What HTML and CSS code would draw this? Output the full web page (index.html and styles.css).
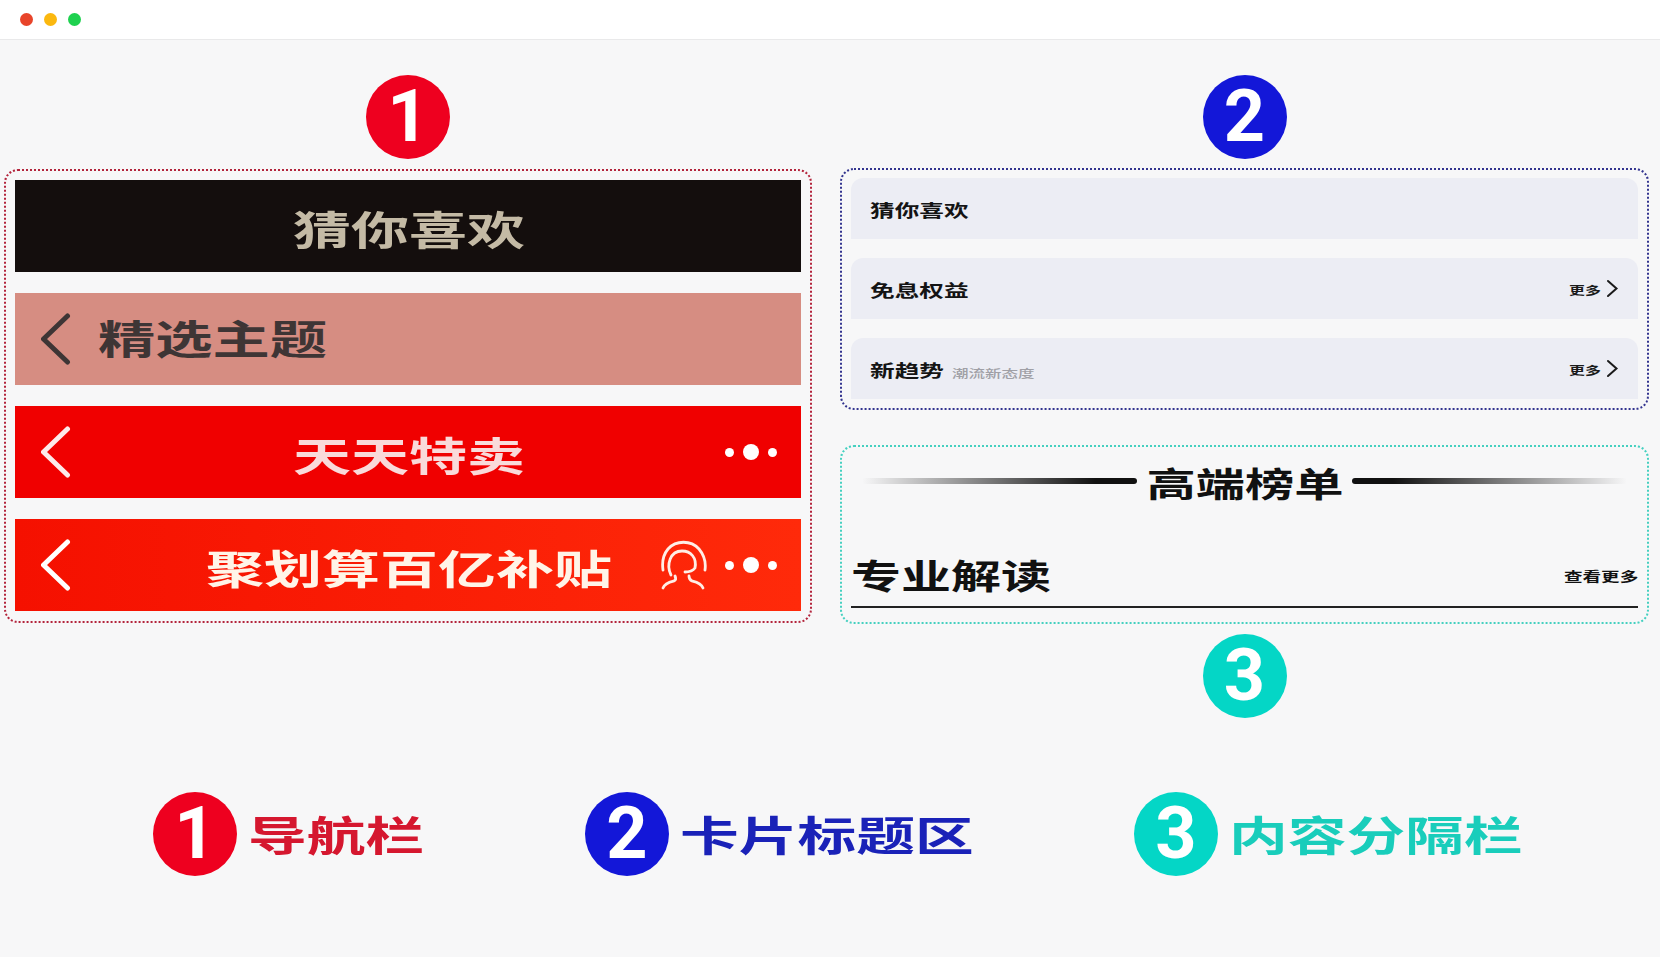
FILE: index.html
```html
<!DOCTYPE html>
<html lang="zh-CN">
<head>
  <meta charset="UTF-8" />
  <meta name="viewport" content="width=device-width, initial-scale=1.0" />
  <title>导航栏 卡片标题区 内容分隔栏</title>
  <link rel="stylesheet" href="styles.css">
</head>
<body>
  <header class="titlebar">
    <span class="light light-red"></span>
    <span class="light light-yellow"></span>
    <span class="light light-green"></span>
  </header>

  <main class="board">
    <section class="col">
      <div class="badge badge-red">1</div>
      <div class="panel panel-red">
        <div class="bar bar-black">
          <span></span>
          <span class="wide bar-title">猜你喜欢</span>
          <span></span>
        </div>
        <div class="bar bar-rose bar-left">
          <svg class="back" viewBox="0 0 30 52"><polyline points="26.5,3 2.5,26 26.5,49" /></svg>
          <span class="wide from-left bar-text">精选主题</span>
        </div>
        <div class="bar bar-red">
          <svg class="back" viewBox="0 0 30 52"><polyline points="26.5,3 2.5,26 26.5,49" /></svg>
          <span class="wide bar-title">天天特卖</span>
          <div class="actions">
            <div class="dots"><i></i><b></b><i></i></div>
          </div>
        </div>
        <div class="bar bar-orange">
          <svg class="back" viewBox="0 0 30 52"><polyline points="26.5,3 2.5,26 26.5,49" /></svg>
          <span class="wide bar-title">聚划算百亿补贴</span>
          <div class="actions">
            <svg class="headset" viewBox="0 0 48 52">
              <path d="M3 31 C2 24 3 16 8 10 C16 1 31 1 39 10 C44 16 46 24 45 31" />
              <path d="M11 36 C6 26 10 12 22 12 C31 12 37 19 35 29 C32 33 28 33 25 33" />
              <path d="M3 49 C5 44 10 43 14 42 C16 41 16 39 15 37" />
              <path d="M43 49 C41 44 36 43 32 42 C30 41 29 39 29 37" />
            </svg>
            <div class="dots"><i></i><b></b><i></i></div>
          </div>
        </div>
      </div>
    </section>

    <section class="col">
      <div class="badge badge-blue">2</div>
      <div class="panel panel-blue">
        <div class="row">
          <span class="wide from-left row-title">猜你喜欢</span>
        </div>
        <div class="row">
          <span class="wide from-left row-title">免息权益</span>
          <a class="more"><span class="wide from-right">更多</span>
            <svg class="next" viewBox="0 0 13 19"><polyline points="2,2 10.5,9.5 2,17" /></svg>
          </a>
        </div>
        <div class="row">
          <div class="row-left">
            <span class="wide from-left row-title row-title-short">新趋势</span>
            <span class="wide from-left row-sub">潮流新态度</span>
          </div>
          <a class="more"><span class="wide from-right">更多</span>
            <svg class="next" viewBox="0 0 13 19"><polyline points="2,2 10.5,9.5 2,17" /></svg>
          </a>
        </div>
      </div>
      <div class="panel panel-teal">
        <div class="rank-head">
          <span class="rule rule-in"></span>
          <div class="rank-title"><span class="wide">高端榜单</span></div>
          <span class="rule rule-out"></span>
        </div>
        <div class="sub-head">
          <span class="wide from-left sub-title">专业解读</span>
          <span class="wide from-right sub-more">查看更多</span>
        </div>
      </div>
      <div class="badge badge-teal">3</div>
    </section>
  </main>

  <footer class="legend">
    <div class="legend-item">
      <div class="badge badge-red">1</div>
      <div class="legend-label label-3 text-red"><span class="wide from-left">导航栏</span></div>
    </div>
    <div class="legend-item">
      <div class="badge badge-blue">2</div>
      <div class="legend-label label-5 text-blue"><span class="wide from-left">卡片标题区</span></div>
    </div>
    <div class="legend-item">
      <div class="badge badge-teal">3</div>
      <div class="legend-label label-5 text-teal"><span class="wide from-left">内容分隔栏</span></div>
    </div>
  </footer>
</body>
</html>
```

FILE: styles.css
```css
:root {
  --bg: #f7f7f8;
  --red: #ee001f;
  --blue: #1317d8;
  --teal: #04d6c6;
  --row: #ecedf4;
}
* {
  box-sizing: border-box;
}
html, body {
  height: 100%;
}
body {
  margin: 0;
  background: var(--bg);
  color: #111;
  font-family: "Noto Sans CJK SC", "Noto Sans", sans-serif;
  font-weight: 700;
  overflow: hidden;
}

/* the source image is stretched sideways, so the text is too */
.wide {
  display: inline-block;
  transform: scaleX(1.45);
  white-space: nowrap;
}
.from-left {
  transform-origin: left center;
}
.from-right {
  transform-origin: right center;
}

.titlebar {
  height: 40px;
  padding-left: 20px;
  display: flex;
  align-items: center;
  gap: 11px;
  background: #fff;
  border-bottom: 1px solid #e9e9ea;
}
.light {
  width: 13px;
  height: 13px;
  border-radius: 50%;
}
.light-red { background: #e8442a; }
.light-yellow { background: #fbb80f; }
.light-green { background: #1ed14f; }

.board {
  display: grid;
  grid-template-columns: 808px 809px;
  column-gap: 28px;
  padding: 35px 0 0 4px;
}
.col {
  display: flex;
  flex-direction: column;
  align-items: center;
}

.badge {
  flex: none;
  width: 84px;
  height: 84px;
  border-radius: 50%;
  display: flex;
  align-items: center;
  justify-content: center;
  color: #fff;
  font-family: Roboto, sans-serif;
  font-size: 72px;
  font-weight: 700;
  line-height: 1;
}
.badge-red { background: var(--red); }
.badge-blue { background: var(--blue); }
.badge-teal { background: var(--teal); }

.panel {
  width: 100%;
  border-radius: 14px;
  border: 2px dotted;
  display: flex;
  flex-direction: column;
}
.panel-red {
  margin-top: 10px;
  height: 454px;
  padding: 9px 9px 0;
  gap: 21px;
  border-color: #b3243c;
}
.panel-blue {
  margin-top: 9px;
  height: 242px;
  padding: 8px 9px 0;
  gap: 19px;
  border-color: #33348f;
}
.panel-teal {
  margin-top: 35px;
  height: 179px;
  padding: 14px 9px 14px;
  border-color: #45d0c0;
}
.col > .panel-teal + .badge {
  margin-top: 10px;
}

.bar {
  flex: none;
  height: 92px;
  padding: 0 24px 0 26px;
  display: grid;
  grid-template-columns: 1fr auto 1fr;
  align-items: center;
}
.bar-left {
  display: flex;
  gap: 27px;
}
.bar-black {
  background: #140e0d;
  color: #c4baa5;
}
.bar-rose {
  background: #d68d82;
  color: #3e3535;
}
.bar-red {
  background: #f00000;
  color: #f9dada;
}
.bar-orange {
  background: linear-gradient(90deg, #f51000, #ff2a0a);
  color: #fff4e8;
}
.bar-title {
  padding-top: 4px;
  font-size: 40px;
  line-height: 52px;
}
.bar-text {
  padding-bottom: 4px;
  font-size: 39.5px;
  line-height: 52px;
}
.back {
  width: 30px;
  height: 52px;
  fill: none;
  stroke: #fff;
  stroke-width: 5;
  stroke-linecap: round;
  stroke-linejoin: round;
}
.bar-rose .back {
  stroke: #3e3535;
}
.bar-red .back {
  stroke: #fdeaea;
}
.actions {
  display: flex;
  align-items: center;
  justify-content: flex-end;
  gap: 17px;
}
.dots {
  display: flex;
  align-items: center;
  gap: 9px;
}
.dots i, .dots b {
  display: block;
  border-radius: 50%;
  background: #fff;
}
.dots i {
  width: 9px;
  height: 9px;
}
.dots b {
  width: 16px;
  height: 16px;
}
.headset {
  width: 48px;
  height: 52px;
  fill: none;
  stroke: #ffeee6;
  stroke-width: 2.8;
  stroke-linecap: round;
}

.row {
  flex: none;
  height: 61px;
  padding: 0 19px 0 19px;
  display: flex;
  align-items: center;
  justify-content: space-between;
  background: var(--row);
  border-radius: 12px 12px 0 0;
}
.row-left {
  display: flex;
  align-items: center;
}
.row-title {
  padding-top: 3px;
  font-size: 17px;
  line-height: 24px;
  color: #141414;
}
.row-title-short {
  margin-right: 31px;
}
.row-sub {
  padding-top: 8px;
  font-size: 11.4px;
  line-height: 16px;
  font-weight: 500;
  color: #a0a0a6;
}
.more {
  display: flex;
  align-items: center;
  gap: 5px;
  font-size: 11px;
  line-height: 14px;
  color: #1a1a1a;
}
.more .wide {
  padding-top: 3px;
}
.next {
  width: 13px;
  height: 19px;
  fill: none;
  stroke: #1a1a1a;
  stroke-width: 2;
  stroke-linecap: round;
}

.rank-head {
  height: 40px;
  padding: 0 11px;
  display: flex;
  align-items: center;
}
.rule {
  flex: 1;
  height: 6px;
  border-radius: 3px;
}
.rule-in {
  background: linear-gradient(90deg, transparent, #111 85%);
}
.rule-out {
  background: linear-gradient(90deg, #111 15%, transparent);
}
.rank-title {
  width: 215px;
  margin-top: 4px;
  text-align: center;
  font-size: 34px;
  line-height: 40px;
}
.sub-head {
  margin-top: auto;
  padding-bottom: 12px;
  display: flex;
  align-items: center;
  justify-content: space-between;
  border-bottom: 2px solid #222;
}
.sub-title {
  font-size: 34.5px;
  line-height: 40px;
}
.sub-more {
  padding-top: 3px;
  font-size: 12.8px;
  line-height: 16px;
}

.legend {
  margin-top: 74px;
  padding-left: 153px;
  display: flex;
  gap: 161px;
}
.legend-item {
  display: flex;
  align-items: center;
  gap: 11px;
}
.legend-label {
  font-size: 40.5px;
  line-height: 52px;
}
.label-3 { width: 176px; }
.label-5 { width: 293px; }
.text-red { color: #d5172f; }
.text-blue { color: #1a22b8; }
.text-teal { color: #19cdbb; }
```
